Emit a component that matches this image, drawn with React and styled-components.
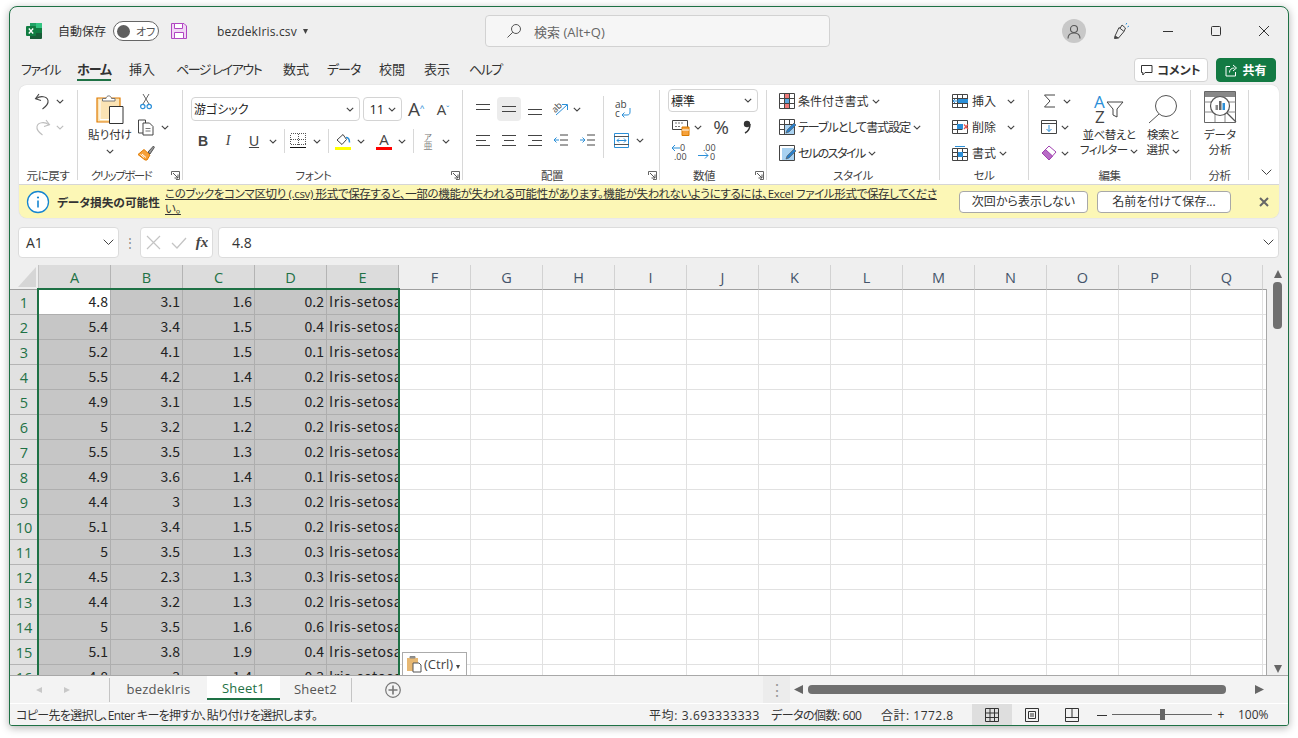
import React from "react";
import styled, { createGlobalStyle } from "styled-components";

const green = "#1e7145";
const blue = "#2b8fd8";

const GlobalStyle = createGlobalStyle`
  html, body {
    margin: 0;
    background: #fff;
    font-family: "Open Sans", "Noto Sans CJK JP", sans-serif;
    font-feature-settings: "palt";
    color: #333;
  }
  * { box-sizing: border-box; }
  svg { flex: none; overflow: visible; }
`;

const Page = styled.div`
  width: 1298px;
  height: 738px;
  padding: 6px 9px 12px;
  overflow: hidden;
`;

const Window = styled.div`
  width: 1280px;
  height: 720px;
  display: flex;
  flex-direction: column;
  background: #efefef;
  border: 1px solid ${green};
  border-radius: 8px 8px 3px 3px;
  box-shadow: 0 2px 8px rgba(0, 0, 0, 0.3);
  overflow: hidden;
`;

const TitleBar = styled.div`
  height: 50px;
  flex: none;
  display: flex;
  align-items: center;
  padding-bottom: 2px;
`;

const TitleLeft = styled.div`
  width: 475px;
  padding-left: 16px;
  display: flex;
  align-items: center;
`;

const AutoSave = styled.span`
  margin-left: 16px;
  width: 47px;
  font-size: 12px;
  white-space: nowrap;
`;

const Toggle = styled.div`
  margin-left: 8px;
  width: 46px;
  height: 20px;
  border: 1px solid #666;
  border-radius: 10px;
  background: #fff;
  display: flex;
  align-items: center;
  padding-left: 3px;
  font-size: 11px;
  color: #555;
  white-space: nowrap;
  &::before {
    content: "";
    width: 13px;
    height: 13px;
    flex: none;
    border-radius: 50%;
    background: #5e5e5e;
    margin-right: 6px;
  }
`;

const FileName = styled.span`
  margin-left: 30px;
  font-size: 12px;
  letter-spacing: 0.15px;
`;

const Search = styled.div`
  width: 345px;
  height: 32px;
  background: #f6f6f6;
  border: 1px solid #d2d2d2;
  border-radius: 4px;
  display: flex;
  align-items: center;
  padding-left: 20px;
  gap: 12px;
  font-size: 13px;
  color: #666;
`;

const TitleRight = styled.div`
  flex: 1;
  display: flex;
  justify-content: flex-end;
`;

const Avatar = styled.div`
  width: 24px;
  height: 24px;
  border-radius: 50%;
  background: #c8c8c8;
  display: flex;
  align-items: center;
  justify-content: center;
`;

const TabRow = styled.div`
  height: 28px;
  flex: none;
  display: flex;
  align-items: flex-start;
  padding: 0 12px 0 11px;
`;

const Tab = styled.div`
  width: ${(p) => p.$w}px;
  height: 24px;
  font-size: 13px;
  line-height: 24px;
  white-space: nowrap;
  color: #333;
  letter-spacing: ${(p) => p.$ls || 0}px;
  font-weight: ${(p) => (p.$active ? 700 : 400)};
`;

const TabText = styled.span`
  display: inline-block;
  height: 24px;
  border-bottom: ${(p) => (p.$active ? `2px solid ${green}` : "none")};
`;

const TabActions = styled.div`
  margin: 1px 0 0 auto;
  display: flex;
  gap: 8px;
`;

const ActionButton = styled.div`
  height: 24px;
  width: ${(p) => p.$w}px;
  border-radius: 4px;
  display: flex;
  align-items: center;
  justify-content: center;
  gap: 4px;
  font-size: 12px;
  font-weight: 700;
  background: ${(p) => (p.$primary ? "#137a43" : "#fff")};
  color: ${(p) => (p.$primary ? "#fff" : "#333")};
  border: 1px solid ${(p) => (p.$primary ? "#137a43" : "#d4d4d4")};
`;

const Panel = styled.div`
  margin: 0 9px;
  flex: none;
  box-shadow: 0 0 1px rgba(0, 0, 0, 0.25);
  border-radius: 8px;
`;

const Ribbon = styled.div`
  height: 100px;
  background: #fff;
  border-radius: 8px 8px 0 0;
  border-bottom: 1px solid #d6d6d6;
  padding-top: 5px;
  display: flex;
`;

const Group = styled.div`
  width: ${(p) => p.$w}px;
  height: 90px;
  flex: none;
  display: flex;
  flex-direction: column;
  border-right: ${(p) => (p.$plain ? "none" : "1px solid #d8d8d8")};
`;

const GroupBody = styled.div`
  height: 76px;
  display: flex;
  padding-left: ${(p) => p.$pl || 0}px;
`;

const LabelRow = styled.div`
  height: 14px;
  display: flex;
  font-size: 11.5px;
  line-height: 20px;
  color: #444;
`;

const LabelText = styled.div`
  flex: 1;
  text-align: center;
  white-space: nowrap;
  letter-spacing: ${(p) => p.$ls || 0}px;
`;

const Launcher = styled.div`
  width: 18px;
  display: flex;
  align-items: center;
  justify-content: flex-end;
  padding: 5px 2px 0 0;
`;

const Rows = styled.div`
  display: flex;
  flex-direction: column;
  margin-top: ${(p) => p.$mt || 0}px;
`;

const Row = styled.div`
  height: ${(p) => p.$h || 26}px;
  margin-top: ${(p) => p.$mt || 0}px;
  padding-left: ${(p) => p.$pl || 0}px;
  display: flex;
  align-items: center;
  font-size: 12px;
  white-space: nowrap;
  letter-spacing: ${(p) => p.$ls || 0}px;
`;

const Cell = styled.div`
  width: ${(p) => p.$w}px;
  margin-left: ${(p) => p.$ml || 0}px;
  height: 24px;
  flex: none;
  display: flex;
  align-items: center;
  justify-content: center;
  border-radius: 4px;
  background: ${(p) => (p.$hover ? "#ececec" : "transparent")};
`;

const VLine = styled.div`
  width: 1px;
  height: ${(p) => p.$h || 24}px;
  margin-top: ${(p) => p.$mt || 0}px;
  background: #d8d8d8;
  flex: none;
`;

const Big = styled.div`
  width: ${(p) => p.$w}px;
  margin-left: ${(p) => p.$ml || 0}px;
  flex: none;
  padding-top: ${(p) => p.$pt || 4}px;
  display: flex;
  flex-direction: column;
  align-items: center;
`;

const BigIcon = styled.div`
  height: ${(p) => p.$h || 30}px;
  display: flex;
  align-items: flex-end;
`;

const BigText = styled.div`
  margin-top: 3px;
  font-size: 11.5px;
  line-height: 15px;
  text-align: center;
  white-space: nowrap;
  letter-spacing: ${(p) => p.$ls || 0}px;
`;

const Combo = styled.div`
  width: ${(p) => p.$w}px;
  height: ${(p) => p.$h || 24}px;
  margin-right: ${(p) => p.$mr || 0}px;
  flex: none;
  border: 1px solid #d4d4d4;
  border-radius: 4px;
  display: flex;
  align-items: center;
  justify-content: space-between;
  padding: 0 5px 0 2px;
  font-size: ${(p) => p.$size || 12}px;
  color: #222;
  background: #fff;
`;

const Glyph = styled.span`
  font-family: ${(p) => p.$family || '"Liberation Sans"'};
  font-size: ${(p) => p.$size || 14}px;
  font-weight: ${(p) => p.$weight || 400};
  font-style: ${(p) => (p.$italic ? "italic" : "normal")};
  text-decoration: ${(p) => (p.$under ? "underline" : "none")};
  color: ${(p) => p.$color || "#444"};
  line-height: 1;
`;

const Message = styled.div`
  height: 33px;
  background: #fcf7b6;
  border-radius: 0 0 8px 8px;
  display: flex;
  align-items: center;
  padding-left: 7px;
  font-size: 12px;
  color: #333;
`;

const MessageTitle = styled.span`
  margin-left: 7px;
  width: 108px;
  flex: none;
  font-size: 11.7px;
  font-weight: 700;
  white-space: nowrap;
`;

const MessageLink = styled.span`
  width: 794px;
  flex: none;
  font-size: 11.5px;
  letter-spacing: -0.35px;
  line-height: 15px;
  margin-top: -1px;
  text-decoration: underline;
  white-space: nowrap;
`;

const MessageButton = styled.div`
  width: ${(p) => p.$w}px;
  margin-right: 9px;
  height: 22px;
  flex: none;
  background: #fff;
  border: 1px solid #a8a8a8;
  border-radius: 4px;
  text-align: center;
  line-height: 20px;
`;

const FormulaBar = styled.div`
  height: 31px;
  flex: none;
  margin: 9px 9px 7px 8px;
  display: flex;
  align-items: center;
`;

const FieldBox = styled.div`
  height: 31px;
  width: ${(p) => p.$w}px;
  flex: ${(p) => (p.$w ? "none" : 1)};
  background: #fff;
  border: 1px solid #dcdcdc;
  border-radius: 4px;
  display: flex;
  align-items: center;
  justify-content: ${(p) => (p.$between ? "space-between" : "flex-start")};
  padding: 0 ${(p) => p.$pr || 4}px 0 ${(p) => p.$pl || 0}px;
  font-size: 14px;
  color: #333;
`;

const Work = styled.div`
  flex: 1;
  min-height: 0;
  display: flex;
`;

const Sheet = styled.div`
  width: 1257px;
  position: relative;
  overflow: hidden;
  &::after {
    content: "";
    position: absolute;
    top: 24px;
    right: 0;
    bottom: 0;
    width: 1px;
    background: #a8a8a8;
  }
`;

const GridTable = styled.div`
  display: grid;
  grid-template-columns: 29px repeat(18, 72px);
  grid-auto-rows: 25px;
  font-family: "Noto Sans CJK JP", sans-serif;
  font-feature-settings: normal;
`;

const Corner = styled.div`
  background: #efefef;
  border-bottom: 1px solid #a0a0a0;
  border-right: 1px solid #c4c4c4;
  display: flex;
  align-items: flex-end;
  justify-content: flex-end;
  padding: 0 2px 2px 0;
`;

const ColHead = styled.div`
  background: ${(p) => (p.$sel ? "#dcdcdc" : "#efefef")};
  color: ${(p) => (p.$sel ? green : "#44546a")};
  border-right: 1px solid ${(p) => (p.$sel ? "#b4b4b4" : "#d2d2d2")};
  border-bottom: 1px solid #a0a0a0;
  font-size: 14.5px;
  display: flex;
  align-items: center;
  justify-content: center;
  font-family: "Open Sans", sans-serif;
`;

const RowHead = styled.div`
  background: #e1e1e1;
  color: ${green};
  border-bottom: 1px solid #b4b4b4;
  border-right: 1px solid #a8a8a8;
  font-size: 14.5px;
  display: flex;
  align-items: center;
  justify-content: center;
  font-family: "Open Sans", sans-serif;
`;

const DataCell = styled.div`
  background: ${(p) => (p.$active ? "#fff" : p.$sel ? "#c6c6c6" : "#fff")};
  border-right: 1px solid ${(p) => (p.$sel ? "#aeaeae" : "#e1e1e1")};
  border-bottom: 1px solid ${(p) => (p.$sel ? "#aeaeae" : "#e1e1e1")};
  font-size: 14px;
  line-height: 22px;
  padding: 0 2px;
  color: #222;
  text-align: ${(p) => (p.$text ? "left" : "right")};
  letter-spacing: ${(p) => (p.$text ? 0.55 : 0)}px;
  white-space: nowrap;
`;

const Selection = styled.div`
  position: absolute;
  left: 27px;
  top: 23px;
  width: 363px;
  height: 400px;
  border: 2px solid ${green};
`;

const PastePopup = styled.div`
  position: absolute;
  left: 392px;
  top: 387px;
  width: 65px;
  height: 26px;
  background: #fff;
  border: 1px solid #ababab;
  display: flex;
  align-items: flex-start;
  padding: 2px 0 0 3px;
  gap: 2px;
  font-size: 13px;
  color: #444;
  z-index: 3;
`;

const VScroll = styled.div`
  flex: 1;
  display: flex;
  flex-direction: column;
  align-items: center;
  padding: 5px 0 2px;
`;

const VThumb = styled.div`
  width: 9px;
  height: 47px;
  margin: 4px 0 auto;
  background: #707070;
  border-radius: 4px;
`;

const SheetBar = styled.div`
  height: 28px;
  flex: none;
  display: flex;
  background: #f3f3f3;
  border-top: 1px solid #a8a8a8;
`;

const SheetNav = styled.div`
  width: 100px;
  height: 24px;
  margin-top: 2px;
  border-right: 1px solid #c4c4c4;
  display: flex;
  padding-left: 18px;
  align-items: center;
`;

const SheetTab = styled.div`
  width: ${(p) => p.$w}px;
  height: 24px;
  background: ${(p) => (p.$active ? "#fff" : "transparent")};
  color: ${(p) => (p.$active ? green : "#555")};
  border-bottom: ${(p) => (p.$active ? `2px solid ${green}` : "none")};
  border-right: ${(p) => (p.$last ? "1px solid #c4c4c4" : "none")};
  margin-top: ${(p) => (p.$active ? 0 : 2)}px;
  font-size: 13px;
  letter-spacing: 0.2px;
  text-align: center;
  line-height: ${(p) => (p.$active ? 25 : 23)}px;
`;

const AddSheet = styled.div`
  width: 82px;
  display: flex;
  align-items: center;
  justify-content: center;
`;

const Grip = styled.div`
  margin-left: 329px;
  width: 27px;
  background: #ececec;
  color: #9a9a9a;
  display: flex;
  align-items: center;
  justify-content: center;
`;

const HScroll = styled.div`
  width: 476px;
  display: flex;
  align-items: center;
  padding-left: 4px;
`;

const HThumb = styled.div`
  width: 418px;
  height: 9px;
  margin: 0 29px 0 5px;
  background: #707070;
  border-radius: 4px;
`;

const StatusBar = styled.div`
  height: 22px;
  flex: none;
  display: flex;
  align-items: center;
  background: #f3f3f3;
  border-top: 1px solid #fff;
  padding-left: 6px;
  font-size: 12px;
  color: #333;
  white-space: nowrap;
`;

const StatusHint = styled.span`
  letter-spacing: -0.65px;
`;

const StatusRight = styled.div`
  margin-left: auto;
  display: flex;
  align-items: center;
  height: 100%;
`;

const Stat = styled.span`
  width: ${(p) => p.$w}px;
  letter-spacing: ${(p) => p.$ls}px;
`;

const ViewButton = styled.div`
  width: 40px;
  height: 100%;
  display: flex;
  align-items: center;
  justify-content: center;
  background: ${(p) => (p.$active ? "#dedede" : "transparent")};
`;

const ZoomSlider = styled.div`
  width: 100px;
  height: 1px;
  background: #666;
  display: flex;
  align-items: center;
  justify-content: center;
  &::before {
    content: "";
    width: 5px;
    height: 11px;
    background: #666;
  }
`;

const ZoomLabel = styled.span`
  width: 31px;
  margin: 0 19px 0 8px;
`;

const Svg = ({ w, h = w, children, ...rest }) => (
  <svg width={w} height={h} viewBox={`0 0 ${w} ${h}`} fill="none" {...rest}>
    {children}
  </svg>
);

const Chevron = ({ color = "#444" }) => (
  <Svg w={8} h={5}>
    <path d="M.8.8 4 4 7.2.8" stroke={color} strokeWidth="1.1" />
  </Svg>
);

const WideChevron = () => (
  <Svg w={11} h={7}>
    <path d="M.7.7 5.5 5.5 10.3.7" stroke="#444" />
  </Svg>
);

const Caret = ({ dir = "down", size = 8, color = "#666" }) => {
  const d = {
    down: `M0 0H${size}L${size / 2} ${size}Z`,
    up: `M0 ${size}H${size}L${size / 2} 0Z`,
    left: `M${size} 0V${size}L0 ${size / 2}Z`,
    right: `M0 0V${size}L${size} ${size / 2}Z`,
  }[dir];
  return (
    <Svg w={size} h={size}>
      <path d={d} fill={color} />
    </Svg>
  );
};

const LaunchIcon = () => (
  <Svg w={9} h={9}>
    <path d="M.5 4V.5H8.5V8.5H5" stroke="#666" />
    <path d="M2 2 7 7M7 3.5V7H3.5" stroke="#555" />
  </Svg>
);

const ExcelLogo = () => (
  <Svg w={16} h={16}>
    <path d="M4 0h11a1 1 0 0 1 1 1v4H4z" fill="#21a366" />
    <path d="M4 5h12v5H4z" fill="#107c41" />
    <path d="M4 10h12v5a1 1 0 0 1-1 1H4z" fill="#185c37" />
    <path d="M10 0h5a1 1 0 0 1 1 1v4h-6z" fill="#33c481" />
    <rect x="0" y="3" width="10" height="10" rx="1" fill="#107c41" />
    <path d="M2.8 5.5l4.4 5M7.2 5.5l-4.400 5" stroke="#fff" strokeWidth="1.3" />
  </Svg>
);

const SaveIcon = () => (
  <Svg w={16} h={16}>
    <path d="M.5.5h12.5l2.500 2.500v12.500H.5z" fill="#f1d7f5" stroke="#b146c2" />
    <path d="M3.5.5h8v5h-8zM3.5 9.5h9v6h-9z" fill="#fff" stroke="#b146c2" />
  </Svg>
);

const SearchIcon = () => (
  <Svg w={16} h={16}>
    <circle cx="10" cy="6" r="4.5" stroke="#555" />
    <path d="M6.8 9.2 1.5 14.5" stroke="#555" />
  </Svg>
);

const UserIcon = () => (
  <Svg w={14} h={15}>
    <circle cx="7" cy="5" r="3.5" stroke="#555" strokeWidth="1.1" />
    <path d="M1 14.5c0-3.5 2.5-5.5 6-5.5s6 2 6 5.5" stroke="#555" strokeWidth="1.1" />
  </Svg>
);

const PenIcon = () => (
  <Svg w={18} h={18}>
    <path d="M7 5.5l5 4L6.500 16 3 14z" stroke="#444" />
    <path d="M3 14l-.5 2.500L6.500 16" fill="#444" stroke="#444" />
    <path d="M8 6.5l2-3.500 3.500 3-1.500 3.500" stroke="#444" />
    <path d="M14 2.5l.8-1.500M15.500 5l1.500-1" stroke={blue} />
  </Svg>
);

const MinIcon = () => (
  <Svg w={10} h={10}>
    <path d="M0 5.5h10" stroke="#333" />
  </Svg>
);

const MaxIcon = () => (
  <Svg w={10} h={10}>
    <rect x=".5" y=".5" width="9" height="9" rx="1" stroke="#333" />
  </Svg>
);

const CloseIcon = ({ size = 10, color = "#333", width = 1 }) => (
  <Svg w={size} h={size}>
    <path d={`M0 0 ${size} ${size}M${size} 0 0 ${size}`} stroke={color} strokeWidth={width} />
  </Svg>
);

const CommentIcon = () => (
  <Svg w={12} h={12}>
    <path d="M.5 1.5h10.500v7H4L1.800 11V8.500H.5z" stroke="#333" />
  </Svg>
);

const ShareIcon = () => (
  <Svg w={13} h={13}>
    <path d="M5 2.5H1v9.500h9.500V8" stroke="#fff" />
    <path d="M4.5 8.5c0-3 2-4.500 5-4.500M8 1l3.500 3L8 7" stroke="#fff" />
  </Svg>
);

const UndoIcon = ({ color = "#444", flip }) => (
  <Svg w={17} h={17} style={flip ? { transform: "scaleX(-1)" } : undefined}>
    <path d="M5 1 1.5 5.8 7 7.5" stroke={color} strokeWidth="1.1" />
    <path d="M2 5.8C6 2.5 13 3 14 7.5c.7 3.5-2 6-5.5 8.5" stroke={color} strokeWidth="1.1" />
  </Svg>
);

const PasteIcon = () => (
  <Svg w={28} h={30}>
    <path d="M1 4h23v24H1z" fill="#fbe3b4" stroke="#e07b00" strokeWidth="1.2" />
    <path d="M6.5 7V4.5h3.500C10.500 1 15 1 15.500 4.500H19V7z" fill="#fff" stroke="#777" />
    <path d="M13.5 12.5h13.500v17H13.500z" fill="#fff" stroke="#333" />
    <path d="M4 6v19.500h9" stroke="#fff" />
  </Svg>
);

const ScissorsIcon = () => (
  <Svg w={12} h={17}>
    <path d="M3 1l6 10M9 1 3 11" stroke="#666" />
    <circle cx="2.8" cy="13.5" r="2.2" stroke={blue} strokeWidth="1.2" />
    <circle cx="9.2" cy="13.5" r="2.2" stroke={blue} strokeWidth="1.2" />
  </Svg>
);

const CopyIcon = () => (
  <Svg w={17} h={17}>
    <path d="M.5 1h7v13h-7z" fill="#fff" stroke="#444" />
    <path d="M5 4h6.500l3.500 3.500V16H5z" fill="#fff" stroke="#444" />
    <path d="M7.5 9.5h5M7.5 12h5" stroke="#777" />
  </Svg>
);

const PainterIcon = () => (
  <Svg w={18} h={16}>
    <path d="M11 7 16.5 1l.8 1.500L13 9z" fill="#999" stroke="#555" />
    <path d="M7 4.5l6 5.500-3 5H8L1 9.500z" fill="#f6a13a" stroke="#e07b00" />
    <path d="M5 9l4 3.500M3.500 9.500l3.500 3" stroke="#fff" />
  </Svg>
);

const BordersIcon = () => (
  <Svg w={16} h={16} shapeRendering="crispEdges">
    <path d="M.5.5h15v11H.5zM8 .5v11M.5 6.5h15" stroke="#555" strokeDasharray="1 1" />
    <path d="M0 14.5h16" stroke="#111" strokeWidth="1.5" />
  </Svg>
);

const FillIcon = () => (
  <Svg w={17} h={17}>
    <path d="M8 1.5 2 7l5 4.500 4.500-5z" fill="#fff" stroke="#444" />
    <path d="M11 4.5c2.500 0 3.500 2 3.500 5" stroke={blue} strokeWidth="1.5" />
    <path d="M0 14h16v3H0z" fill="#ffff00" />
  </Svg>
);

const FontColorIcon = () => (
  <Svg w={16} h={17}>
    <text x="8" y="12" textAnchor="middle" fontSize="15" fontFamily="Open Sans" fill="#444">A</text>
    <path d="M0 14h16v3H0z" fill="#ff0000" />
  </Svg>
);

const Furigana = () => (
  <Svg w={14} h={17}>
    <text x="7" y="7" textAnchor="middle" fontSize="8" fontFamily="Noto Sans CJK JP" fill="#777">ア</text>
    <text x="7" y="16" textAnchor="middle" fontSize="9" fontFamily="Noto Sans CJK JP" fill="#888">亜</text>
  </Svg>
);

const Lines = ({ widths, align = "left", top = 3 }) => (
  <Svg w={14} h={18}>
    {widths.map((lw, i) => {
      const x = align === "left" ? 0 : align === "right" ? 14 - lw : (14 - lw) / 2;
      return <path key={i} d={`M${x} ${top + i * 5 + 0.5}h${lw}`} stroke="#444" />;
    })}
  </Svg>
);

const OrientIcon = () => (
  <Svg w={18} h={18}>
    <text x="1" y="10" fontSize="9" fontFamily="Open Sans" fill="#444" transform="rotate(-45 6 9)">ab</text>
    <path d="M4 15 15 5M10 4.5h5.500V10" stroke={blue} />
  </Svg>
);

const IndentIcon = ({ out }) => (
  <Svg w={15} h={14}>
    <path d="M7 2h8M7 7h8M7 12h8" stroke="#444" />
    {out ? (
      <path d="M6 7H1M3.5 4.5 1 7l2.500 2.500" stroke={blue} />
    ) : (
      <path d="M0 7h5M2.5 4.5 5 7 2.500 9.500" stroke={blue} />
    )}
  </Svg>
);

const WrapIcon = () => (
  <Svg w={18} h={19}>
    <text x="1" y="8" fontSize="10" fontFamily="Open Sans" fill="#444">ab</text>
    <text x="1" y="17" fontSize="10" fontFamily="Open Sans" fill="#444">c</text>
    <path d="M16 8v4c0 2-1 3-3 3H8M10.5 12.5 8 15l2.500 2.500" stroke={blue} />
  </Svg>
);

const MergeIcon = () => (
  <Svg w={15} h={15}>
    <path d="M.5.5h14v14H.5z" stroke={blue} />
    <path d="M0 3.5h15M0 11.5h15" stroke="#555" />
    <path d="M3 7.5h9M5 5.5l-2 2 2 2M10 5.5l2 2-2 2" stroke={blue} />
  </Svg>
);

const AccountingIcon = () => (
  <Svg w={18} h={17}>
    <path d="M.5 1.5h15v9H.5z" stroke="#444" />
    <path d="M3 4h9M3 7.5h6" stroke="#777" strokeDasharray="2 1" />
    <path d="M10 8h7v8.500h-7z" fill="#f6a13a" stroke="#d87a00" />
    <path d="M10 11h7" stroke="#fff" />
  </Svg>
);

const CommaIcon = () => (
  <Svg w={8} h={14}>
    <circle cx="4" cy="4" r="3.2" fill="#333" />
    <path d="M7 4c0 4-2 7.500-5 9" stroke="#333" strokeWidth="1.5" />
  </Svg>
);

const Decimal = ({ more }) => (
  <Svg w={20} h={19}>
    <text x={more ? 6 : 10} y="8" fontSize="9" fontFamily="Open Sans" fill="#444">{more ? ".00" : "0"}</text>
    <text x={more ? 13 : 4} y="17" fontSize="9" fontFamily="Open Sans" fill="#444">{more ? "0" : ".00"}</text>
    {more ? (
      <path d="M1 12.5h10M8 9.5l3 3-3 3" stroke={blue} />
    ) : (
      <path d="M10 5H2M5 2 2 5l3 3" stroke={blue} />
    )}
  </Svg>
);

const CondIcon = () => (
  <Svg w={16} h={16}>
    <path d="M1 1h14v14H1z" fill="#fff" />
    <path d="M6 1h5v5H6zM6 10h5v5H6z" fill="#ee7a7a" />
    <path d="M6 6h5v4H6z" fill="#5aa6e0" />
    <path d="M.5.5h15v15H.5zM5.5.5v15M10.5.5v15M.5 5.5h15M.5 10.5h15" stroke="#444" />
  </Svg>
);

const TableIcon = () => (
  <Svg w={17} h={16}>
    <path d="M.5.5h15v15H.5zM5.5.5v15M10.5.5v15M.5 5.5h15M.5 10.5h15" stroke="#444" />
    <path d="M6 6h9v9H6z" fill="#a9d2f1" />
    <path d="M15 4l2 2-7 7-3 1 1-3z" fill="#2b7fc8" stroke="#555" strokeWidth=".6" />
  </Svg>
);

const StyleIcon = () => (
  <Svg w={17} h={16}>
    <path d="M.5.5h15v15H.5z" stroke="#444" />
    <path d="M3 3h12v12H3z" fill="#a9d2f1" />
    <path d="M15 4l2 2-7 7-3 1 1-3z" fill="#2b7fc8" stroke="#555" strokeWidth=".6" />
  </Svg>
);

const InsertIcon = () => (
  <Svg w={17} h={14}>
    <path d="M.5.5h15v13H.5zM5.5.5v13M10.5.5v13M.5 4.5h15M.5 9.5h15" stroke="#444" />
    <path d="M6 5h10v4H6z" fill={blue} />
    <path d="M6 7H1M3 5 1 7l2 2" stroke={blue} />
  </Svg>
);

const DeleteIcon = () => (
  <Svg w={17} h={14}>
    <path d="M.5.5h15v13H.5zM5.5.5v13M.5 4.5h10M.5 9.5h10" stroke="#444" />
    <path d="M5 4h6v5H5z" fill={blue} />
    <path d="M12 4.5l4 4.500M16 4.500 12 9" stroke="#e8524a" strokeWidth="1.2" />
  </Svg>
);

const FormatIcon = () => (
  <Svg w={16} h={15}>
    <path d="M.5 2.5h15v12H.5zM5.5 2.5v12M10.5 2.5v12M.5 6.5h15M.5 10.5h15" stroke="#444" />
    <path d="M6 6h5v5H6z" fill={blue} />
    <path d="M3 .5h10" stroke={blue} />
  </Svg>
);

const SumIcon = () => (
  <Svg w={13} h={14}>
    <path d="M12 1H1.5L7 7l-5.500 6H12" stroke="#444" />
  </Svg>
);

const FillDownIcon = () => (
  <Svg w={16} h={14}>
    <path d="M.5.5h15v13H.5zM.5 3.5h15" stroke="#444" />
    <path d="M8 5v6.500M5.500 9 8 11.500 10.500 9" stroke={blue} />
  </Svg>
);

const EraserIcon = () => (
  <Svg w={16} h={16}>
    <path d="M8 1l7 6-7 8-7-7z" fill="#fff" stroke="#a040b0" />
    <path d="M4.5 4.5 11.5 11 8 15 1 8z" fill="#b86cc6" stroke="#a040b0" />
  </Svg>
);

const SortIcon = () => (
  <Svg w={30} h={30}>
    <text x="0" y="14" fontSize="17" fontFamily="Open Sans" fill={blue}>A</text>
    <text x="1" y="29" fontSize="17" fontFamily="Open Sans" fill="#444">Z</text>
    <path d="M13 8h16l-6 7v8l-4-2v-6z" stroke="#444" />
  </Svg>
);

const FindIcon = () => (
  <Svg w={31} h={30}>
    <circle cx="18" cy="12" r="10.5" stroke="#555" />
    <path d="M11 20 1 29" stroke="#555" />
  </Svg>
);

const AnalysisIcon = () => (
  <Svg w={33} h={33}>
    <path d="M.5.5h31v31H.5z" fill="#fff" stroke="#666" />
    <path d="M1 1h30v5H1z" fill="#888" />
    <path d="M.5 11h31M.5 21h31M11 6v25M21 6v25" stroke="#888" />
    <circle cx="16" cy="15" r="9.5" fill="#fff" stroke="#555" strokeWidth="1.2" />
    <path d="M11.5 14h2.500v5h-2.500z" fill="#888" />
    <path d="M15 10h2.500v9H15z" fill="#666" />
    <path d="M18.5 12h2.500v7h-2.500z" fill={blue} />
    <path d="M23 22l9 9" stroke="#555" strokeWidth="1.2" />
  </Svg>
);

const InfoIcon = () => (
  <Svg w={24} h={24}>
    <circle cx="12" cy="12" r="10.5" fill="#fff" stroke="#1685d0" strokeWidth="1.3" />
    <path d="M12 10.5v7" stroke="#1685d0" strokeWidth="1.6" />
    <circle cx="12" cy="7.5" r="1.1" fill="#1685d0" />
  </Svg>
);

const CheckIcon = () => (
  <Svg w={16} h={12}>
    <path d="M1 6l5 5L15 1" stroke="#c4c4c4" strokeWidth="1.3" />
  </Svg>
);

const CornerMark = () => (
  <Svg w={18} h={20}>
    <path d="M18 0v20H0z" fill="#d6d6d6" />
  </Svg>
);

const PasteSmall = () => (
  <Svg w={16} h={18}>
    <path d="M1 3h11v13H1z" fill="#e7b873" />
    <path d="M4 3V1.5h5V3z" fill="#999" stroke="#888" />
    <path d="M7 8h6l2 2v7H7z" fill="#fff" stroke="#555" />
  </Svg>
);

const AddIcon = () => (
  <Svg w={16} h={16}>
    <circle cx="8" cy="8" r="7.3" stroke="#777" strokeWidth="1.2" />
    <path d="M8 3.5v9M3.5 8h9" stroke="#777" strokeWidth="1.6" />
  </Svg>
);

const NormalView = () => (
  <Svg w={14} h={14}>
    <path d="M.5.5h13v13H.5zM5 .5v13M9.5.5v13M.5 5h13M.5 9.5h13" stroke="#333" />
  </Svg>
);

const LayoutView = () => (
  <Svg w={14} h={14}>
    <path d="M.5.5h13v13H.5z" stroke="#333" />
    <path d="M3.5 3.5h7v7h-7zM5 6h4M5 8h4" stroke="#333" />
  </Svg>
);

const BreakView = () => (
  <Svg w={14} h={14}>
    <path d="M.5.5h13v13H.5zM.5 9.5h13M7 .5v9" stroke="#333" />
  </Svg>
);

const tabs = [
  ["ファイル", 56, -1.5],
  ["ホーム", 52, -1, true],
  ["挿入", 47, 0],
  ["ページ レイアウト", 107, -1.5],
  ["数式", 44, 0],
  ["データ", 52, -1],
  ["校閲", 45, 0],
  ["表示", 45, 0],
  ["ヘルプ", 40, -1.5],
];

const columns = "ABCDEFGHIJKLMNOPQR".split("");

const rows = [
  [4.8, 3.1, 1.6, 0.2],
  [5.4, 3.4, 1.5, 0.4],
  [5.2, 4.1, 1.5, 0.1],
  [5.5, 4.2, 1.4, 0.2],
  [4.9, 3.1, 1.5, 0.2],
  [5, 3.2, 1.2, 0.2],
  [5.5, 3.5, 1.3, 0.2],
  [4.9, 3.6, 1.4, 0.1],
  [4.4, 3, 1.3, 0.2],
  [5.1, 3.4, 1.5, 0.2],
  [5, 3.5, 1.3, 0.3],
  [4.5, 2.3, 1.3, 0.3],
  [4.4, 3.2, 1.3, 0.2],
  [5, 3.5, 1.6, 0.6],
  [5.1, 3.8, 1.9, 0.4],
  [4.8, 3, 1.4, 0.3],
];

const GroupLabel = ({ children, launcher, ls = -0.4 }) => (
  <LabelRow>
    <LabelText $ls={ls}>{children}</LabelText>
    {launcher && (
      <Launcher>
        <LaunchIcon />
      </Launcher>
    )}
  </LabelRow>
);

const Title = () => (
  <TitleBar>
    <TitleLeft>
      <ExcelLogo />
      <AutoSave>自動保存</AutoSave>
      <Toggle>オフ</Toggle>
      <Cell $w={16} $ml={12}>
        <SaveIcon />
      </Cell>
      <FileName>bezdekIris.csv</FileName>
      <Cell $w={18}>
        <Caret size={5} color="#444" />
      </Cell>
    </TitleLeft>
    <Search>
      <SearchIcon />
      検索 (Alt+Q)
    </Search>
    <TitleRight>
      <Cell $w={47}>
        <Avatar>
          <UserIcon />
        </Avatar>
      </Cell>
      <Cell $w={47}>
        <PenIcon />
      </Cell>
      <Cell $w={48}>
        <MinIcon />
      </Cell>
      <Cell $w={48}>
        <MaxIcon />
      </Cell>
      <Cell $w={48}>
        <CloseIcon />
      </Cell>
    </TitleRight>
  </TitleBar>
);

const MenuTabs = () => (
  <TabRow>
    {tabs.map(([label, w, ls, active]) => (
      <Tab key={label} $w={w} $ls={ls} $active={active}>
        <TabText $active={active}>{label}</TabText>
      </Tab>
    ))}
    <TabActions>
      <ActionButton $w={74}>
        <CommentIcon />
        コメント
      </ActionButton>
      <ActionButton $w={60} $primary>
        <ShareIcon />
        共有
      </ActionButton>
    </TabActions>
  </TabRow>
);

const UndoGroup = () => (
  <Group $w={59}>
    <GroupBody $pl={12}>
      <Rows $mt={-2}>
        <Row>
          <Cell $w={22}>
            <UndoIcon />
          </Cell>
          <Cell $w={14}>
            <Chevron />
          </Cell>
        </Row>
        <Row>
          <Cell $w={22}>
            <UndoIcon color="#bdbdbd" flip />
          </Cell>
          <Cell $w={14}>
            <Chevron color="#bdbdbd" />
          </Cell>
        </Row>
      </Rows>
    </GroupBody>
    <GroupLabel>元に戻す</GroupLabel>
  </Group>
);

const ClipboardGroup = () => (
  <Group $w={105}>
    <GroupBody $pl={10}>
      <Big $w={44}>
        <BigIcon>
          <PasteIcon />
        </BigIcon>
        <BigText>
          貼り付け
          <br />
          <Chevron />
        </BigText>
      </Big>
      <Rows $mt={-2}>
        <Row>
          <Cell $w={28}>
            <ScissorsIcon />
          </Cell>
        </Row>
        <Row>
          <Cell $w={28}>
            <CopyIcon />
          </Cell>
          <Cell $w={10}>
            <Chevron />
          </Cell>
        </Row>
        <Row>
          <Cell $w={28}>
            <PainterIcon />
          </Cell>
        </Row>
      </Rows>
    </GroupBody>
    <GroupLabel launcher ls={-1.5}>クリップボード</GroupLabel>
  </Group>
);

const FontGroup = () => (
  <Group $w={280}>
    <GroupBody $pl={8}>
      <Rows>
        <Row $h={24} $mt={7}>
          <Combo $w={169} $mr={3}>
            游ゴシック
            <Chevron />
          </Combo>
          <Combo $w={39} $size={13}>
            &nbsp;11
            <Chevron />
          </Combo>
          <Cell $w={28}>
            <Glyph $family='"Open Sans"' $size={19}>A</Glyph>
            <Glyph $size={9} $color={blue}>^</Glyph>
          </Cell>
          <Cell $w={26}>
            <Glyph $family='"Open Sans"' $size={15}>A</Glyph>
            <Glyph $size={9} $color={blue}>ˇ</Glyph>
          </Cell>
        </Row>
        <Row $h={24} $mt={8}>
          <Cell $w={24}>
            <Glyph $size={14} $weight={700}>B</Glyph>
          </Cell>
          <Cell $w={26}>
            <Glyph $size={14} $italic $family='"Liberation Serif"'>I</Glyph>
          </Cell>
          <Cell $w={26}>
            <Glyph $size={14} $under>U</Glyph>
          </Cell>
          <Cell $w={12}>
            <Chevron />
          </Cell>
          <Cell $w={10}>
            <VLine />
          </Cell>
          <Cell $w={18}>
            <BordersIcon />
          </Cell>
          <Cell $w={20}>
            <Chevron />
          </Cell>
          <Cell $w={2}>
            <VLine />
          </Cell>
          <Cell $w={28}>
            <FillIcon />
          </Cell>
          <Cell $w={8}>
            <Chevron />
          </Cell>
          <Cell $w={28} $ml={5}>
            <FontColorIcon />
          </Cell>
          <Cell $w={8}>
            <Chevron />
          </Cell>
          <Cell $w={14}>
            <VLine />
          </Cell>
          <Cell $w={16}>
            <Furigana />
          </Cell>
          <Cell $w={20}>
            <Chevron />
          </Cell>
        </Row>
      </Rows>
    </GroupBody>
    <GroupLabel launcher>フォント</GroupLabel>
  </Group>
);

const AlignGroup = () => (
  <Group $w={197}>
    <GroupBody $pl={8}>
      <Rows>
        <Row $h={24} $mt={7}>
          <Cell $w={24}>
            <Lines widths={[14, 14]} top={4} />
          </Cell>
          <Cell $w={24} $ml={2} $hover>
            <Lines widths={[14, 14]} top={6} />
          </Cell>
          <Cell $w={28}>
            <Lines widths={[14, 14]} top={9} />
          </Cell>
          <Cell $w={24}>
            <OrientIcon />
          </Cell>
          <Cell $w={8}>
            <Chevron />
          </Cell>
        </Row>
        <Row $h={24} $mt={7}>
          <Cell $w={24}>
            <Lines widths={[14, 10, 14]} top={4} />
          </Cell>
          <Cell $w={24} $ml={2}>
            <Lines widths={[14, 10, 14]} top={4} align="center" />
          </Cell>
          <Cell $w={28}>
            <Lines widths={[14, 10, 14]} top={4} align="right" />
          </Cell>
          <Cell $w={22}>
            <IndentIcon out />
          </Cell>
          <Cell $w={32}>
            <IndentIcon />
          </Cell>
        </Row>
      </Rows>
      <VLine $h={62} $mt={6} />
      <Rows>
        <Row $h={24} $mt={7}>
          <Cell $w={38}>
            <WrapIcon />
          </Cell>
        </Row>
        <Row $h={24} $mt={7}>
          <Cell $w={34}>
            <MergeIcon />
          </Cell>
          <Cell $w={4}>
            <Chevron />
          </Cell>
        </Row>
      </Rows>
    </GroupBody>
    <GroupLabel launcher>配置</GroupLabel>
  </Group>
);

const NumberGroup = () => (
  <Group $w={107}>
    <GroupBody $pl={8}>
      <Rows $mt={-1}>
        <Combo $w={90} $h={23}>
          標準
          <Chevron />
        </Combo>
        <Row $mt={2}>
          <Cell $w={26}>
            <AccountingIcon />
          </Cell>
          <Cell $w={8}>
            <Chevron />
          </Cell>
          <Cell $w={38}>
            <Glyph $size={19} $family='"Open Sans"'>%</Glyph>
          </Cell>
          <Cell $w={14}>
            <CommaIcon />
          </Cell>
        </Row>
        <Row $mt={-1}>
          <Cell $w={24}>
            <Decimal />
          </Cell>
          <Cell $w={30}>
            <Decimal more />
          </Cell>
        </Row>
      </Rows>
    </GroupBody>
    <GroupLabel launcher>数値</GroupLabel>
  </Group>
);

const StyleRow = ({ icon, ls, children }) => (
  <Row $pl={11} $ls={ls}>
    <Cell $w={18}>{icon}</Cell>
    <Cell $w={2} />
    {children}
    <Cell $w={14}>
      <Chevron />
    </Cell>
  </Row>
);

const StyleGroup = () => (
  <Group $w={173}>
    <GroupBody>
      <Rows $mt={-2}>
        <StyleRow icon={<CondIcon />}>条件付き書式</StyleRow>
        <StyleRow icon={<TableIcon />} ls={-1}>テーブルとして書式設定</StyleRow>
        <StyleRow icon={<StyleIcon />} ls={-1.5}>セルのスタイル</StyleRow>
      </Rows>
    </GroupBody>
    <GroupLabel>スタイル</GroupLabel>
  </Group>
);

const CellRow = ({ icon, label, arrow }) => (
  <Row $pl={11}>
    <Cell $w={18}>{icon}</Cell>
    <Cell $w={3} />
    {label}
    <Cell $w={arrow}>
      <Chevron />
    </Cell>
  </Row>
);

const CellsGroup = () => (
  <Group $w={89}>
    <GroupBody>
      <Rows $mt={-2}>
        <CellRow icon={<InsertIcon />} label="挿入" arrow={30} />
        <CellRow icon={<DeleteIcon />} label="削除" arrow={30} />
        <CellRow icon={<FormatIcon />} label="書式" arrow={14} />
      </Rows>
    </GroupBody>
    <GroupLabel>セル</GroupLabel>
  </Group>
);

const EditGroup = () => (
  <Group $w={162}>
    <GroupBody $pl={11}>
      <Rows $mt={-2}>
        <Row>
          <Cell $w={18}>
            <SumIcon />
          </Cell>
          <Cell $w={18}>
            <Chevron />
          </Cell>
        </Row>
        <Row>
          <Cell $w={18}>
            <FillDownIcon />
          </Cell>
          <Cell $w={14}>
            <Chevron />
          </Cell>
        </Row>
        <Row>
          <Cell $w={18}>
            <EraserIcon />
          </Cell>
          <Cell $w={14}>
            <Chevron />
          </Cell>
        </Row>
      </Rows>
      <Big $w={56} $ml={5}>
        <BigIcon>
          <SortIcon />
        </BigIcon>
        <BigText $ls={-0.5}>
          並べ替えと
          <br />
          フィルター <Chevron />
        </BigText>
      </Big>
      <Big $w={46} $ml={3}>
        <BigIcon>
          <FindIcon />
        </BigIcon>
        <BigText $ls={-0.3}>
          検索と
          <br />
          選択 <Chevron />
        </BigText>
      </Big>
    </GroupBody>
    <GroupLabel>編集</GroupLabel>
  </Group>
);

const AnalysisGroup = () => (
  <Group $w={58}>
    <GroupBody>
      <Big $w={58} $pt={1}>
        <BigIcon $h={33}>
          <AnalysisIcon />
        </BigIcon>
        <BigText>
          データ
          <br />
          分析
        </BigText>
      </Big>
    </GroupBody>
    <GroupLabel>分析</GroupLabel>
  </Group>
);

const CollapseRibbon = () => (
  <Group $w={30} $plain>
    <GroupBody />
    <Row $h={12}>
      <Cell $w={34}>
        <WideChevron />
      </Cell>
    </Row>
  </Group>
);

const MessageBar = () => (
  <Message>
    <InfoIcon />
    <MessageTitle>データ損失の可能性</MessageTitle>
    <MessageLink>
      このブックをコンマ区切り (.csv) 形式で保存すると、一部の機能が失われる可能性があります。機能が失われないようにするには、Excel ファイル形式で保存してくださ
      <br />
      い。
    </MessageLink>
    <MessageButton $w={129}>次回から表示しない</MessageButton>
    <MessageButton $w={134}>名前を付けて保存...</MessageButton>
    <Cell $w={30} $ml={9}>
      <CloseIcon size={8} color="#666" width={2} />
    </Cell>
  </Message>
);

const Formula = () => (
  <FormulaBar>
    <FieldBox $w={101} $pl={7} $pr={4} $between>
      A1
      <WideChevron />
    </FieldBox>
    <Cell $w={21}>
      <Glyph $size={12} $color="#888">⋮</Glyph>
    </Cell>
    <FieldBox $w={73}>
      <Cell $w={25}>
        <CloseIcon size={13} color="#c4c4c4" width={1.2} />
      </Cell>
      <Cell $w={25}>
        <CheckIcon />
      </Cell>
      <Cell $w={22}>
        <Glyph $size={15} $italic $weight={700} $family='"Liberation Serif"'>fx</Glyph>
      </Cell>
    </FieldBox>
    <Cell $w={5} />
    <FieldBox $pl={13} $pr={4} $between>
      4.8
      <WideChevron />
    </FieldBox>
  </FormulaBar>
);

const Grid = () => (
  <Sheet>
    <GridTable>
      <Corner>
        <CornerMark />
      </Corner>
      {columns.map((c, i) => (
        <ColHead key={c} $sel={i < 5}>
          {c}
        </ColHead>
      ))}
      {rows.map((row, r) => (
        <React.Fragment key={r}>
          <RowHead>{r + 1}</RowHead>
          {columns.map((c, i) => (
            <DataCell key={c} $sel={i < 5} $active={r === 0 && i === 0} $text={i === 4}>
              {i < 4 ? row[i] : i === 4 ? "Iris-setosa" : ""}
            </DataCell>
          ))}
        </React.Fragment>
      ))}
    </GridTable>
    <Selection />
    <PastePopup>
      <PasteSmall />
      (Ctrl)
      <Cell $w={6}>
        <Caret size={4} color="#444" />
      </Cell>
    </PastePopup>
  </Sheet>
);

const SheetTabs = () => (
  <SheetBar>
    <SheetNav>
      <Cell $w={22}>
        <Caret dir="left" size={6} color="#c8c8c8" />
      </Cell>
      <Cell $w={34}>
        <Caret dir="right" size={6} color="#c8c8c8" />
      </Cell>
    </SheetNav>
    <SheetTab $w={97}>bezdekIris</SheetTab>
    <SheetTab $w={73} $active>Sheet1</SheetTab>
    <SheetTab $w={72} $last>Sheet2</SheetTab>
    <AddSheet>
      <AddIcon />
    </AddSheet>
    <Grip>⋮</Grip>
    <HScroll>
      <Caret dir="left" size={9} color="#666" />
      <HThumb />
      <Caret dir="right" size={9} color="#666" />
    </HScroll>
  </SheetBar>
);

const Status = () => (
  <StatusBar>
    <StatusHint>コピー先を選択し、Enter キーを押すか、貼り付けを選択します。</StatusHint>
    <StatusRight>
      <Stat $w={122} $ls={0.6}>平均: 3.693333333</Stat>
      <Stat $w={110} $ls={-0.5}>データの個数: 600</Stat>
      <Stat $w={91} $ls={0.5}>合計: 1772.8</Stat>
      <ViewButton $active>
        <NormalView />
      </ViewButton>
      <ViewButton>
        <LayoutView />
      </ViewButton>
      <ViewButton>
        <BreakView />
      </ViewButton>
      <Cell $w={20}>
        <MinIcon />
      </Cell>
      <ZoomSlider />
      <Cell $w={18}>+</Cell>
      <ZoomLabel>100%</ZoomLabel>
    </StatusRight>
  </StatusBar>
);

export default function App() {
  return (
    <Page>
      <GlobalStyle />
      <Window>
        <Title />
        <MenuTabs />
        <Panel>
          <Ribbon>
            <UndoGroup />
            <ClipboardGroup />
            <FontGroup />
            <AlignGroup />
            <NumberGroup />
            <StyleGroup />
            <CellsGroup />
            <EditGroup />
            <AnalysisGroup />
            <CollapseRibbon />
          </Ribbon>
          <MessageBar />
        </Panel>
        <Formula />
        <Work>
          <Grid />
          <VScroll>
            <Caret dir="up" size={8} color="#666" />
            <VThumb />
            <Caret size={8} color="#666" />
          </VScroll>
        </Work>
        <SheetTabs />
        <Status />
      </Window>
    </Page>
  );
}
